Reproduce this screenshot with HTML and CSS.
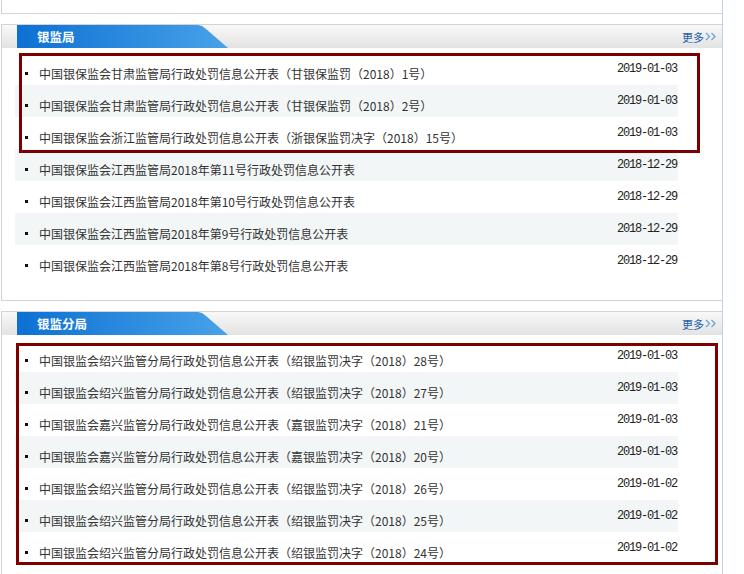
FILE: index.html
```html
<!DOCTYPE html>
<html lang="zh-CN">
<head>
    <meta charset="UTF-8">
    <title>银监局 - 行政处罚信息公开表</title>
    <link rel="stylesheet" href="styles.css">
</head>
<body>

<div class="wrap">
    <div class="top-box"></div>

    <div class="panel">
        <div class="panel-head">
            <div class="tab">银监局</div>
            <a class="more" href="#">更多<svg width="12" height="9" viewBox="0 0 12 9"><polyline points="1,1 4.5,4.5 1,8"/><polyline points="6.5,1 10,4.5 6.5,8"/></svg></a>
        </div>
        <ul class="news-list">
            <li><span class="title">中国银保监会甘肃监管局行政处罚信息公开表（甘银保监罚（2018）1号）</span><span class="date">2019-01-03</span></li>
            <li><span class="title">中国银保监会甘肃监管局行政处罚信息公开表（甘银保监罚（2018）2号）</span><span class="date">2019-01-03</span></li>
            <li><span class="title">中国银保监会浙江监管局行政处罚信息公开表（浙银保监罚决字（2018）15号）</span><span class="date">2019-01-03</span></li>
            <li><span class="title">中国银保监会江西监管局2018年第11号行政处罚信息公开表</span><span class="date">2018-12-29</span></li>
            <li><span class="title">中国银保监会江西监管局2018年第10号行政处罚信息公开表</span><span class="date">2018-12-29</span></li>
            <li><span class="title">中国银保监会江西监管局2018年第9号行政处罚信息公开表</span><span class="date">2018-12-29</span></li>
            <li><span class="title">中国银保监会江西监管局2018年第8号行政处罚信息公开表</span><span class="date">2018-12-29</span></li>
        </ul>
        <div class="mark mark-first"></div>
    </div>

    <div class="panel">
        <div class="panel-head">
            <div class="tab">银监分局</div>
            <a class="more" href="#">更多<svg width="12" height="9" viewBox="0 0 12 9"><polyline points="1,1 4.5,4.5 1,8"/><polyline points="6.5,1 10,4.5 6.5,8"/></svg></a>
        </div>
        <ul class="news-list">
            <li><span class="title">中国银监会绍兴监管分局行政处罚信息公开表（绍银监罚决字（2018）28号）</span><span class="date">2019-01-03</span></li>
            <li><span class="title">中国银监会绍兴监管分局行政处罚信息公开表（绍银监罚决字（2018）27号）</span><span class="date">2019-01-03</span></li>
            <li><span class="title">中国银监会嘉兴监管分局行政处罚信息公开表（嘉银监罚决字（2018）21号）</span><span class="date">2019-01-03</span></li>
            <li><span class="title">中国银监会嘉兴监管分局行政处罚信息公开表（嘉银监罚决字（2018）20号）</span><span class="date">2019-01-03</span></li>
            <li><span class="title">中国银监会绍兴监管分局行政处罚信息公开表（绍银监罚决字（2018）26号）</span><span class="date">2019-01-02</span></li>
            <li><span class="title">中国银监会绍兴监管分局行政处罚信息公开表（绍银监罚决字（2018）25号）</span><span class="date">2019-01-02</span></li>
            <li><span class="title">中国银监会绍兴监管分局行政处罚信息公开表（绍银监罚决字（2018）24号）</span><span class="date">2019-01-02</span></li>
        </ul>
        <div class="mark mark-second"></div>
    </div>
</div>

</body>
</html>
```

FILE: styles.css
```css
/* Lista ogłoszeń - układ jak na stronie urzędu */
body {
    margin: 0;
    padding: 0;
    background-color: #fff;
    color: #333;
    font-family: "Noto Sans CJK SC", "Noto Sans", sans-serif;
    font-size: 12px;
}

.wrap {
    width: 722px;
    border-right: 1px solid #c3d0e3;
    min-height: 574px;
}

.top-box {
    margin-left: 1px;
    height: 13px;
    border-left: 1px solid #d3d3d3;
    border-bottom: 1px solid #d3d3d3;
}

.panel {
    position: relative;
    margin: 10px 0 0 1px;
    border: 1px solid #d3d3d3;
    border-right: none;
    padding-bottom: 23px;
}

.panel-head {
    display: flex;
    align-items: center;
    justify-content: space-between;
    height: 23px;
    background: linear-gradient(#f8f8f8, #e3e3e3);
}

.tab {
    align-self: stretch;
    width: 211px;
    margin-left: 15px;
    padding-left: 20px;
    box-sizing: border-box;
    line-height: 23px;
    color: #fff;
    font-weight: bold;
    font-size: 12.5px;
    background: linear-gradient(to right, #0d71d3, #48a2e8);
    clip-path: polygon(0 0, 181px 0, 185px 1px, 189px 4px, 211px 23px, 0 23px);
}

.more {
    display: flex;
    align-items: center;
    margin-right: 5px;
    color: #1f5fa8;
    text-decoration: none;
    font-size: 11px;
    line-height: 14px;
}

.more svg {
    margin-left: 1px;
    fill: none;
    stroke: #6ea3d6;
    stroke-width: 1.3;
}

.news-list {
    list-style: none;
    margin: 5px 0 0 13px;
    padding: 0;
    width: 663px;
}

.news-list li {
    display: flex;
    justify-content: space-between;
    height: 32px;
}

.news-list li:nth-child(even) {
    background-color: #f2f6f7;
}

.title {
    padding: 14px 0 0 10px;
    line-height: 14px;
    color: #333;
    white-space: nowrap;
}

.title::before {
    content: "";
    display: inline-block;
    width: 3px;
    height: 3px;
    margin-right: 11px;
    background-color: #111;
    vertical-align: 4px;
}

.date {
    padding: 9px 1px 0 0;
    line-height: 14px;
    font-family: "Liberation Mono", monospace;
    font-size: 12px;
    letter-spacing: -1.2px;
    color: #222;
}

/* czerwona ramka zaznaczenia */
.mark {
    position: absolute;
    border: 3px solid #7d0000;
    box-sizing: border-box;
}

.mark-first {
    top: 28px;
    left: 17px;
    width: 681px;
    height: 100px;
}

.mark-second {
    top: 31px;
    left: 14px;
    width: 702px;
    height: 222px;
}
```
